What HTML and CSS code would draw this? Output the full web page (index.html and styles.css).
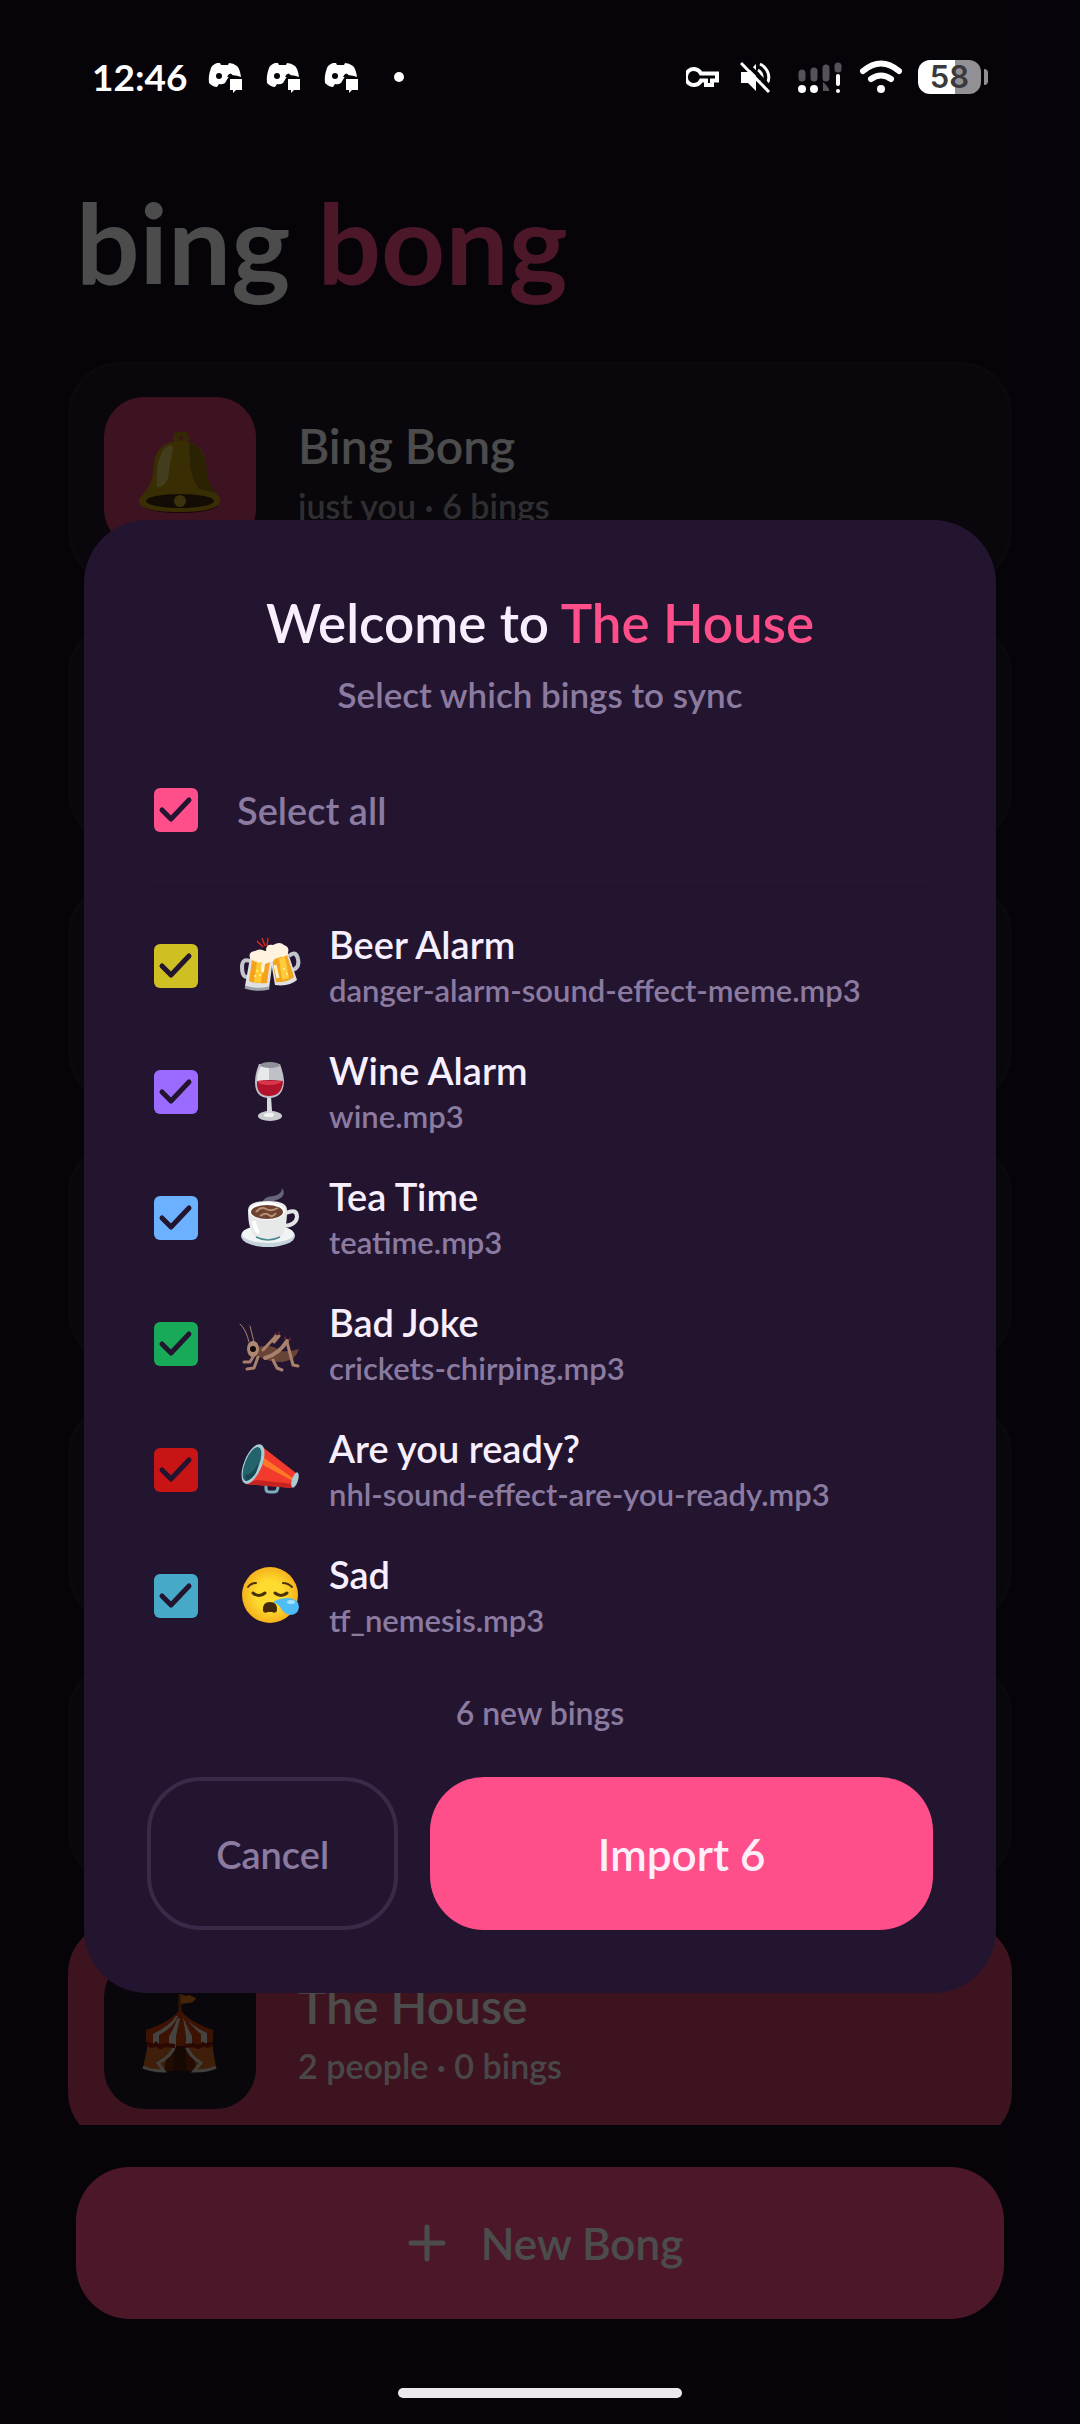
FILE: index.html
```html
<!DOCTYPE html>
<html lang="en">
<head>
<meta charset="utf-8">
<meta name="viewport" content="width=device-width, initial-scale=1">
<title>bing bong</title>
<link rel="stylesheet" href="styles.css">
</head>
<body>
<svg class="defs" aria-hidden="true">
  <symbol id="discord" viewBox="0 0 35 31">
    <path fill="#fff" d="M12 1 9 1Q4 3 3 6Q0 14 1 21Q5 25 9 25L11 22Q14 23 17 21L20 16Q23 11 33 15Q32 7 29 4Q25 1 21 1L20 3H13Z"/>
    <circle cx="11" cy="14" r="3" fill="#06040a"/>
    <path fill="#06040a" d="M19 15q3-7 7 0z"/>
    <path fill="#fff" d="M22 17h12v11h-6l-3 3v-3h-3z"/>
  </symbol>
</svg>

<header class="status">
  <div class="status-side">
    <time class="clock">12:46</time>
    <svg class="discord"><use href="#discord"/></svg>
    <svg class="discord"><use href="#discord"/></svg>
    <svg class="discord"><use href="#discord"/></svg>
    <span class="dot"></span>
  </div>
  <div class="status-side status-right">
    <svg width="34" height="34" viewBox="0 0 34 34" fill="none" stroke="#fff" stroke-width="4"><path d="M15 13.500A8 8 0 1 0 15 20.500H20V25H26V20.500H31V13.500Z"/><circle cx="8" cy="17" r="2" stroke="none" fill="#06040a"/></svg>
    <svg class="mute" width="32" height="32" viewBox="0 0 32 32" fill="none" stroke="#fff"><path fill="#fff" stroke="none" d="M1 11h7l8-8v27l-8-8H1z"/><path stroke-width="3" d="M18 9q5 3 4 11M20 3c8 4 11 13 7 20"/><path stroke="#06040a" stroke-width="4" d="M4 0l28 28"/><path stroke-width="3" d="M1 2l28 29"/></svg>
    <svg class="signal" width="44" height="34" viewBox="0 0 44 34" stroke-linecap="round" stroke-width="7"><path stroke="#555359" d="M4 13v5M16 11v7M28 8v10M40 6v3"/><path d="M25 31v-9q4 3 6 7v2z" fill="#555359" stroke="none"/><g fill="#fff"><circle cx="4" cy="29" r="4"/><circle cx="16" cy="29" r="4"/><circle cx="40" cy="31" r="2"/></g><path stroke="#fff" stroke-width="4" d="M40 16v8"/></svg>
    <svg class="wifi" width="44" height="34" viewBox="0 0 44 34" fill="none" stroke="#fff" stroke-width="6" stroke-linecap="round"><path d="M4 11q18-15 36 0M12 19q10-7 20 0"/><circle cx="22" cy="29" r="4" fill="#fff" stroke="none"/></svg>
    <span class="battery">58</span><span class="nub"></span>
  </div>
</header>

<main class="app">
  <h1 class="brand">bing <span>bong</span></h1>
  <ul class="bongs">
    <li class="bong">
      <span class="tile">
        <svg viewBox="0 0 82 82"><ellipse cx="41" cy="73" rx="38" ry="8" fill="#5b1630"/><circle cx="42" cy="6" r="5" fill="none" stroke="#b08a10" stroke-width="6"/><path fill="#c09810" d="M41 9C58 9 66 19 67 32C68 44 69 52 77 61Q82 66 81 70Q78 80 41 80Q2 80 0 70Q0 66 5 61C13 52 14 44 15 32C16 19 24 9 41 9"/><path fill="#8f6e0c" d="M50 10Q64 15 67 32Q68 50 77 61L60 57Q50 42 51 26z"/><path fill="#efdf88" d="M24 18Q34 9 34 18Q30 32 29 46Q25 56 18 55Q17 44 19 30z" opacity=".7"/><ellipse cx="41" cy="69" rx="34" ry="7" fill="#3d2810"/><circle cx="41" cy="69" r="6" fill="#c5a32b"/></svg>
      </span>
      <div><h2>Bing Bong</h2><p>just you · 6 bings</p></div>
    </li>
    <li class="bong"></li>
    <li class="bong"></li>
    <li class="bong"></li>
    <li class="bong"></li>
    <li class="bong"></li>
    <li class="bong bong-active">
      <span class="tile">
        <svg viewBox="0 0 82 82"><path d="M41 2V18" stroke="#a54810" stroke-width="3"/><path fill="#e0791c" d="M42 2Q47 5 50 3L57 6Q55 11 49 11L42 12z"/><path fill="#c8400a" d="M41 16Q46 28 74 38V50Q41 58 7 50V38Q36 28 41 16"/><path fill="#e6e0d4" d="M37 24Q32 33 14 42V52H20V43Q34 36 39 24ZM38 27Q36 35 30 44V53H37V44L41 26ZM44 25L47 44V53H53V44Q47 33 44 25ZM45 24Q55 37 62 42V51H68V41Q52 34 45 24Z"/><path fill="#d2691e" d="M9 52Q41 58 73 52L77 77H4Z"/><path fill="#7a2a0c" d="M29 54H54L57 79H25z"/><path fill="#4a1c08" d="M36 54H46L48 79H34z"/><path fill="#d2691e" d="M9 52L36 54Q34 64 20 71Q22 77 26 80L4 77ZM73 52L46 54Q50 64 62 71Q58 77 54 80L77 77Z"/><path d="M36 53Q33 64 19 71L25 79Q12 79 4 75M47 53Q50 64 62 71L55 79Q70 79 77 75" fill="none" stroke="#ddd6ca" stroke-width="3"/><path d="M8 51q5 5 9 1q4 5 9 1l10 1M46 54l9-1q5 4 9-1q5 4 9-1" stroke="#8f1d08" stroke-width="4" fill="none"/></svg>
      </span>
      <div><h2>The House</h2><p>2 people · 0 bings</p></div>
    </li>
  </ul>
  <footer class="actions">
    <button class="new-bong" type="button">
      <svg width="60" height="60" viewBox="0 0 60 60" stroke="currentColor" stroke-width="5" stroke-linecap="round"><path d="M30 14v32M14 30h32"/></svg>
      New Bong
    </button>
  </footer>
</main>

<div class="overlay">
  <form class="modal" role="dialog" aria-labelledby="modal-title">
    <h2 class="modal-title" id="modal-title">Welcome to <span>The House</span></h2>
    <p class="modal-sub">Select which bings to sync</p>
    <label class="select-all"><input class="check pink" type="checkbox" checked>Select all</label>
    <div class="bings">
      <label class="bing"><input class="check yellow" type="checkbox" checked>
        <svg class="emoji" viewBox="0 0 60 60"><path d="M17 5l6 6M22 2l3 8M28 2l-1 8" stroke="#d8261c" stroke-width="1.500"/><path d="M49 20q7-6 9 3q2 8-5 11" fill="none" stroke="#c3c6cc" stroke-width="4"/><path fill="#dfe1e4" d="M30 20l18-3 9 27q-8 7-22 5z"/><path fill="#f2a51d" d="M32 22l15-3 7 22q-7 6-18 5z"/><path fill="#ffcc3d" d="M39 22l6-1 4 21-7 2z"/><path d="M35 29l3 13" stroke="#fff3c8" stroke-width="3"/><path fill="#fff3df" d="M26 14q0-6 7-5q7-4 11 0q6 2 4 8q-1 4-8 4q-7 4-11-1z"/><path d="M10 25q-8-3-8 6q0 11 6 10" fill="none" stroke="#c3c6cc" stroke-width="4"/><path fill="#dfe1e4" d="M10 22h23l-4 31q-13 2-24-3z"/><path fill="#f5a11a" d="M12 24h18l-3 23q-11 1-18-2z"/><path fill="#ffc933" d="M17 25h7l-3 22-7-1z"/><g fill="#fff2a0"><circle cx="17" cy="35" r="1"/><circle cx="15" cy="40" r="1"/><circle cx="20" cy="39" r="1"/><circle cx="44" cy="33" r="1"/><circle cx="47" cy="38" r="1"/></g><path fill="#fff3df" d="M10 22q-2-6 5-7q5-3 10 0q8-2 10 5q0 6-5 6l-5 2-1 8q-3 2-3-3l1-7q-6 2-12-4"/><path d="M5 51q12 4 24 1" stroke="#9ea3aa" stroke-width="3" fill="none"/></svg>
        <span class="bing-text"><span class="bing-name">Beer Alarm</span><span class="bing-file">danger-alarm-sound-effect-meme.mp3</span></span></label>
      <label class="bing"><input class="check purple" type="checkbox" checked>
        <svg class="emoji" viewBox="0 0 60 60"><ellipse cx="30" cy="54" rx="12" ry="5" fill="#c9cbce"/><path fill="#d6d8da" d="M27 34h4l1 15q2 3 5 4H22q4-1 5-4z"/><path fill="#bfc1c6" d="M19 2h21q4 11 4 18q-1 16-15 16T15 20q0-8 4-18"/><path fill="#e8e9eb" d="M21 4h8v15H17q0-8 4-15"/><path fill="#b3122b" d="M17 19q12-2 26 0q-1 15-14 15T17 19"/><path fill="#d9354c" d="M17 19h25q-3 4-13 4t-12-4"/><ellipse cx="30" cy="3" rx="10" ry="3" fill="#8f9198"/><ellipse cx="29" cy="53" rx="5" ry="2" fill="#f3f3f3"/></svg>
        <span class="bing-text"><span class="bing-name">Wine Alarm</span><span class="bing-file">wine.mp3</span></span></label>
      <label class="bing"><input class="check blue" type="checkbox" checked>
        <svg class="emoji" viewBox="0 0 60 60"><path fill="#66657a" d="M42 0q5 7-3 11q-6 2-9 4h-8q2-7 12-7q8-2 8-8"/><ellipse cx="28" cy="48" rx="27" ry="11" fill="#c5d3dc"/><ellipse cx="28" cy="46" rx="26" ry="9" fill="#f1f4f5"/><path d="M46 25q11-5 11 4q-1 8-13 9" fill="none" stroke="#e3e5e6" stroke-width="4"/><path fill="#e7e8e8" d="M8 22q0-9 20-9t19 10q0 20-7 26q-12 6-24 0Q8 43 8 22"/><path d="M16 49q12 6 24 0" stroke="#4b8790" stroke-width="1.500" fill="none"/><ellipse cx="27" cy="23" rx="18" ry="9" fill="#fff"/><ellipse cx="27" cy="24" rx="16" ry="7" fill="#6d4232"/><path d="M16 24q5-6 10-3t12-1M20 28q6-4 9-1t7-2" stroke="#b98f73" stroke-width="2" fill="none"/><path d="M14 33q1 9 5 12" stroke="#fff" stroke-width="4" fill="none"/></svg>
        <span class="bing-text"><span class="bing-name">Tea Time</span><span class="bing-file">teatime.mp3</span></span></label>
      <label class="bing"><input class="check green" type="checkbox" checked>
        <svg class="emoji" viewBox="0 0 60 60" fill="none" stroke="#a9806b" stroke-width="3" stroke-linecap="round" stroke-linejoin="round"><path stroke-width="1" d="M0 10q6 5 9 18M10 12l4 16"/><path fill="#684436" stroke="none" d="M18 33q15-3 22 4q10 1 19-2q-3 11-16 13q-16 0-25-6z"/><path d="M23 36L36 22M34 28l5-6M18 43l-4 11-7 1M13 43l-3 5H4M33 46l4 8 5 2"/><path stroke-width="4" d="M25 44q14-4 22-17"/><path d="M47 28l6 23 5 1"/><path stroke="#a32f33" stroke-width="1" d="M34 21l2-2M39 20v-2M45 25v-2M50 26v-2"/><ellipse cx="13" cy="35" rx="6" ry="8" fill="#ae8773" stroke="none"/><circle cx="13" cy="35" r="3" fill="#0b0808" stroke="none"/></svg>
        <span class="bing-text"><span class="bing-name">Bad Joke</span><span class="bing-file">crickets-chirping.mp3</span></span></label>
      <label class="bing"><input class="check red" type="checkbox" checked>
        <svg class="emoji" viewBox="0 0 60 60"><path d="M26 44v5q0 3 4 3h4q4 0 4-6" fill="none" stroke="#80aabd" stroke-width="3"/><path fill="#f23a2d" d="M20 5l36 28-4 15-47-4z"/><path fill="#c42320" d="M17 40l36 4-1 4-47-4z"/><path fill="#ff7828" d="M24 18l29 20v3L23 25z"/><ellipse cx="13" cy="24" rx="9" ry="21" transform="rotate(22 13 24)" fill="#a9cbd4"/><ellipse cx="12" cy="24" rx="7" ry="18" transform="rotate(22 12 24)" fill="#22636c"/><path fill="#184752" d="M5 35q8 0 13-12q0 14-12 18z"/><ellipse cx="55" cy="40" rx="3" ry="8" transform="rotate(18 55 40)" fill="#a9cbd4"/></svg>
        <span class="bing-text"><span class="bing-name">Are you ready?</span><span class="bing-file">nhl-sound-effect-are-you-ready.mp3</span></span></label>
      <label class="bing"><input class="check teal" type="checkbox" checked>
        <svg class="emoji" viewBox="0 0 60 60"><defs><radialGradient id="face"><stop offset=".5" stop-color="#fddb2f"/><stop offset="1" stop-color="#f6b21c"/></radialGradient></defs><circle cx="30" cy="29" r="28" fill="url(#face)"/><path d="M8 21q3-4 8-4M43 17q5 0 9 4" fill="none" stroke="#4a3309" stroke-width="2" stroke-linecap="round"/><path d="M13 27q6 5 12 0M35 27q6 5 12 0" fill="none" stroke="#4a3309" stroke-width="3" stroke-linecap="round"/><path fill="#43290b" d="M23 45q-1-9 7-9t7 9q-2 3-5 1h-4q-4 2-5-1"/><path fill="#4fbdf5" d="M33 36q6-4 16-4q10 1 10 9q-1 8-9 8q-5-1-8-5q-3-6-9-8"/><ellipse cx="51" cy="36" rx="4" ry="2" fill="#a7e1fc"/></svg>
        <span class="bing-text"><span class="bing-name">Sad</span><span class="bing-file">tf_nemesis.mp3</span></span></label>
    </div>
    <p class="count">6 new bings</p>
    <div class="buttons">
      <button class="cancel" type="button">Cancel</button>
      <button class="import" type="submit">Import 6</button>
    </div>
  </form>
</div>
<div class="home-bar"></div>
</body>
</html>
```
FILE: styles.css
```css
* { box-sizing: border-box; }
h1, h2, p, ul { margin: 0; padding: 0; }
body {
  margin: 0;
  position: relative;
  min-height: 100vh;
  background: #140d21;
  color: #fff;
  font-family: Lato, "Open Sans", sans-serif;
  font-weight: 600;
}
button, input { font: inherit; margin: 0; }
svg { display: block; flex: none; }
.defs { position: absolute; width: 0; height: 0; }

/* System status bar, above the dimmed page */
.status {
  position: absolute;
  inset: 0 0 auto;
  z-index: 3;
  display: flex;
  justify-content: space-between;
  align-items: center;
  padding: 52px 92px 0;
  height: 102px;
}
.status-side { display: flex; align-items: center; }
.clock { font-size: 37px; line-height: 48px; font-weight: 700; margin-right: 21px; }
.discord { width: 35px; height: 31px; margin-right: 23px; }
.dot { width: 10px; height: 10px; margin-left: 12px; border-radius: 50%; background: #fff; }
.mute { margin-left: 20px; }
.signal { margin-left: 26px; }
.wifi { margin-left: 17px; }
.battery {
  width: 63px;
  height: 34px;
  margin-left: 15px;
  border-radius: 12px;
  background: linear-gradient(90deg, #fff 59%, #929094 59%);
  color: #3a393c;
  font: 600 31px/34px Inter, sans-serif;
  text-align: center;
}
.nub { width: 4px; height: 16px; margin-left: 3px; border-radius: 0 4px 4px 0; background: #929094; }

.app { display: flex; flex-direction: column; height: 100vh; padding-top: 172px; }
.brand { padding: 0 76px; font-size: 112px; line-height: 140px; font-weight: 700; }
.brand span, .modal-title span { color: #ff4f8b; }
.bongs {
  flex: 1;
  min-height: 0;
  overflow: hidden;
  display: flex;
  flex-direction: column;
  gap: 38px;
  margin-top: 50px;
  padding: 0 68px;
  list-style: none;
}
.bong {
  flex: none;
  display: flex;
  align-items: center;
  gap: 42px;
  min-height: 222px;
  padding: 32px 33px;
  border: 3px solid #251f2e;
  border-radius: 52px;
  background: #1f1828;
}
.bong-active { background: #cc4268; border-color: #cc4268; }
.tile {
  display: grid;
  place-items: center;
  width: 152px;
  height: 152px;
  border-radius: 40px;
  background: #cc426f;
}
.bong-active .tile { background: #1f1828; }
.tile svg { width: 82px; height: 82px; }
.bong h2 { font-size: 48px; line-height: 60px; font-weight: 600; }
.bong p { font-size: 34px; line-height: 48px; color: #a09ca5; margin-top: 6px; }
.bong-active p { color: #f3eef0; }
.actions { padding: 42px 76px 105px; }
.new-bong {
  display: flex;
  align-items: center;
  justify-content: center;
  gap: 24px;
  width: 100%;
  height: 152px;
  border: 0;
  border-radius: 54px;
  background: #ff4f8b;
  color: #fff;
  font-size: 44px;
}

.overlay {
  position: absolute;
  inset: 0;
  z-index: 2;
  display: flex;
  align-items: center;
  padding: 89px 84px 0;
  background: rgba(0, 0, 0, .7);
}
.modal {
  display: flex;
  flex-direction: column;
  width: 100%;
  padding: 69px 63px 63px;
  border-radius: 63px;
  background: #231530;
}
.modal-title { font-size: 53px; line-height: 68px; font-weight: 600; color: #f7effd; text-align: center; }
.modal-sub { margin-top: 15px; font-size: 35px; line-height: 44px; color: #8b7ba0; text-align: center; }
.select-all {
  display: flex;
  align-items: center;
  gap: 39px;
  height: 144px;
  margin-top: 23px;
  padding-left: 7px;
  border-bottom: 2px solid #251632;
  color: #8b7ba0;
  font-size: 38px;
}
.check {
  appearance: none;
  flex: none;
  width: 44px;
  height: 44px;
  border-radius: 6px;
  background: url("data:image/svg+xml,%3Csvg xmlns='http://www.w3.org/2000/svg' viewBox='0 0 44 44' fill='none' stroke='%23231530' stroke-width='5' stroke-linecap='round' stroke-linejoin='round'%3E%3Cpath d='M8 22l9 9 18-19'/%3E%3C/svg%3E") center / 44px;
}
.pink { background-color: #ff4f8b; }
.yellow { background-color: #cebf22; }
.purple { background-color: #9b6bff; }
.blue { background-color: #6bb1ff; }
.green { background-color: #18aa58; }
.red { background-color: #c81414; }
.teal { background-color: #46a9c8; }
.bings { padding: 20px 0 0 7px; }
.bing { display: flex; align-items: center; height: 126px; }
.emoji { width: 60px; height: 60px; margin: 0 29px 0 42px; overflow: visible; }
.bing-text { display: flex; flex-direction: column; }
.bing-name { font-size: 38px; line-height: 48px; color: #f7effd; }
.bing-file { font-size: 31px; line-height: 44px; color: #8b7ba0; }
.count { margin-top: 34px; font-size: 32px; line-height: 40px; color: #8b7ba0; text-align: center; }
.buttons { display: grid; grid-template-columns: 1fr 2fr; gap: 32px; margin-top: 44px; }
.buttons button { height: 153px; border: 0; border-radius: 54px; }
.buttons .cancel { border: 4px solid #3a2949; background: none; color: #8b7ba0; font-size: 38px; }
.buttons .import { background: #ff4f8b; color: #fdeef8; font-size: 44px; }

.home-bar {
  position: absolute;
  bottom: 26px;
  left: 50%;
  z-index: 3;
  width: 284px;
  height: 10px;
  margin-left: -142px;
  border-radius: 5px;
  background: #ebe9eb;
}
```
